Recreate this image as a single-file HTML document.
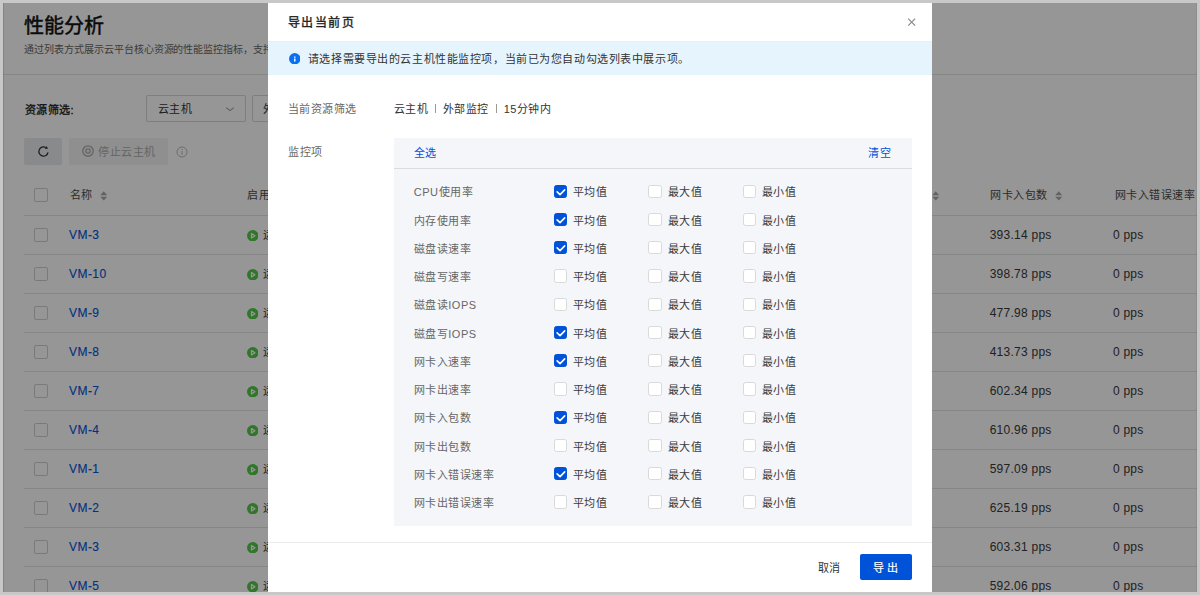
<!DOCTYPE html>
<html lang="zh-CN"><head><meta charset="utf-8">
<style>
*{margin:0;padding:0;box-sizing:border-box}
html,body{width:1200px;height:595px;overflow:hidden;background:#fff}
body{font-family:"Liberation Sans",sans-serif;position:relative;color:#333}
.a{position:absolute;white-space:nowrap}
#bg{position:absolute;left:0;top:0;width:1200px;height:595px;background:#fff}
#ov{position:absolute;left:0;top:0;width:1200px;height:595px;background:rgba(0,0,0,0.41)}
#frame{position:absolute;left:0;top:0;width:1200px;height:595px;border:3px solid #c8c8c8}
.hl{position:absolute;height:1px;background:#e0e5e3}
.cb{position:absolute;width:13.5px;height:13.5px;border:1px solid #d0d0d0;border-radius:2px;background:#fff}
#modal{position:absolute;left:268px;top:3px;width:664px;height:600px;background:#fff}
.pcb{position:absolute;width:13.3px;height:13.3px;border:1px solid #d9d9d9;border-radius:2.5px;background:#fff}
.pcb.on{background:#0052d9;border-color:#0052d9}
</style></head><body>
<div id="bg">
<div class="a" style="left:24.00px;top:15.70px;font-size:20px;line-height:20px;letter-spacing:0px;color:#111;font-weight:normal;-webkit-text-stroke:0.5px #111">性能分析</div>
<div class="a" style="left:23.80px;top:39.80px;font-size:10px;line-height:20px;letter-spacing:-0.02px;color:#666;font-weight:normal;">通过列表方式展示云平台核心资源的性能监控指标，支持通过多种维度进行筛选</div>
<div class="hl" style="left:3px;top:74px;width:1194px"></div>
<div class="a" style="left:24.60px;top:99.80px;font-size:11px;line-height:20px;letter-spacing:0.5px;color:#222;font-weight:normal;-webkit-text-stroke:0.3px #222">资源筛选:</div>
<div class="a" style="left:146px;top:95px;width:100px;height:27px;border:1px solid #d6d6d6;border-radius:2px"></div>
<div class="a" style="left:157.50px;top:99.30px;font-size:11px;line-height:20px;letter-spacing:0.5px;color:#333;font-weight:normal;">云主机</div>
<svg class="a" style="left:225px;top:106px" width="10" height="6" viewBox="0 0 10 6"><path d="M1.2 1.6 L5 4.6 L8.8 1.6" fill="none" stroke="#a0a0a0" stroke-width="1.1"/></svg>
<div class="a" style="left:252px;top:95px;width:100px;height:27px;border:1px solid #d6d6d6;border-radius:2px"></div>
<div class="a" style="left:263.00px;top:99.30px;font-size:11px;line-height:20px;letter-spacing:0.5px;color:#333;font-weight:normal;">外部监控</div>
<div class="a" style="left:24px;top:138px;width:38px;height:27px;background:#e8eaee;border-radius:2px"></div>
<svg class="a" style="left:36.5px;top:145px" width="13" height="13" viewBox="0 0 13 13"><path d="M11.03 7.3 A4.6 4.6 0 1 1 8.8 2.52" fill="none" stroke="#333" stroke-width="1.25"/><path d="M10.9 3.7 L7.9 3.9 L9.7 0.9 Z" fill="#333"/></svg>
<div class="a" style="left:69px;top:138px;width:99px;height:27px;background:#f3f3f3;border-radius:2px"></div>
<svg class="a" style="left:81.6px;top:145.4px" width="12" height="12" viewBox="0 0 12 12"><circle cx="6" cy="6" r="5.2" fill="none" stroke="#a9a9a9" stroke-width="1.3"/><rect x="3.9" y="3.9" width="4.2" height="4.2" rx="1.6" fill="none" stroke="#a9a9a9" stroke-width="1.3"/></svg>
<div class="a" style="left:98.40px;top:142.00px;font-size:11px;line-height:20px;letter-spacing:0.5px;color:#acacac;font-weight:normal;">停止云主机</div>
<svg class="a" style="left:175.6px;top:146px" width="12" height="12" viewBox="0 0 12 12"><circle cx="6" cy="6" r="5" fill="none" stroke="#bbb" stroke-width="1"/><rect x="5.5" y="5" width="1" height="3.8" fill="#bbb"/><rect x="5.5" y="3" width="1" height="1.1" fill="#bbb"/></svg>
<div class="cb" style="left:34px;top:188px"></div>
<div class="a" style="left:69.50px;top:185.00px;font-size:11px;line-height:20px;letter-spacing:0.5px;color:#4a4a4a;font-weight:normal;">名称</div>
<svg class="a" style="left:99.7px;top:190.5px" width="7.5" height="10" viewBox="0 0 7.5 10"><path d="M3.75 0.3 L7.2 4.2 L0.3 4.2 Z M3.75 9.6 L7.2 5.7 L0.3 5.7 Z" fill="#a8a8a8"/></svg>
<div class="a" style="left:247.00px;top:185.00px;font-size:11px;line-height:20px;letter-spacing:0.5px;color:#4a4a4a;font-weight:normal;">启用状态</div>
<svg class="a" style="left:932.0px;top:190.5px" width="7.5" height="10" viewBox="0 0 7.5 10"><path d="M3.75 0.3 L7.2 4.2 L0.3 4.2 Z M3.75 9.6 L7.2 5.7 L0.3 5.7 Z" fill="#a8a8a8"/></svg>
<div class="a" style="left:990.00px;top:185.00px;font-size:11px;line-height:20px;letter-spacing:0.5px;color:#4a4a4a;font-weight:normal;">网卡入包数</div>
<svg class="a" style="left:1055.2px;top:190.5px" width="7.5" height="10" viewBox="0 0 7.5 10"><path d="M3.75 0.3 L7.2 4.2 L0.3 4.2 Z M3.75 9.6 L7.2 5.7 L0.3 5.7 Z" fill="#a8a8a8"/></svg>
<div class="a" style="left:1114.50px;top:185.00px;font-size:11px;line-height:20px;letter-spacing:0.5px;color:#4a4a4a;font-weight:normal;">网卡入错误速率</div>
<div class="hl" style="left:24px;top:214.5px;width:1173px"></div>
<div class="cb" style="left:34px;top:228.4px"></div>
<div class="a" style="left:69.00px;top:224.70px;font-size:12px;line-height:20px;letter-spacing:0.45px;color:#0052d9;font-weight:normal;-webkit-text-stroke:0.1px #0052d9">VM-3</div>
<svg class="a" style="left:246.9px;top:229.6px" width="11.5" height="11.5" viewBox="0 0 12 12"><circle cx="6" cy="6" r="6" fill="#55c94a"/><path d="M4.7 3.7 L8.3 6 L4.7 8.3 Z" fill="none" stroke="#fff" stroke-width="1.3" stroke-linejoin="round"/></svg>
<div class="a" style="left:263.00px;top:225.10px;font-size:11px;line-height:20px;letter-spacing:0.5px;color:#333;font-weight:normal;">运行中</div>
<div class="a" style="left:989.70px;top:224.70px;font-size:12px;line-height:20px;letter-spacing:0.25px;color:#383838;font-weight:normal;">393.14 pps</div>
<div class="a" style="left:1112.90px;top:224.70px;font-size:12px;line-height:20px;letter-spacing:0.25px;color:#383838;font-weight:normal;">0 pps</div>
<div class="hl" style="left:24px;top:253.5px;width:1173px"></div>
<div class="cb" style="left:34px;top:267.4px"></div>
<div class="a" style="left:69.00px;top:263.70px;font-size:12px;line-height:20px;letter-spacing:0.45px;color:#0052d9;font-weight:normal;-webkit-text-stroke:0.1px #0052d9">VM-10</div>
<svg class="a" style="left:246.9px;top:268.6px" width="11.5" height="11.5" viewBox="0 0 12 12"><circle cx="6" cy="6" r="6" fill="#55c94a"/><path d="M4.7 3.7 L8.3 6 L4.7 8.3 Z" fill="none" stroke="#fff" stroke-width="1.3" stroke-linejoin="round"/></svg>
<div class="a" style="left:263.00px;top:264.10px;font-size:11px;line-height:20px;letter-spacing:0.5px;color:#333;font-weight:normal;">运行中</div>
<div class="a" style="left:989.70px;top:263.70px;font-size:12px;line-height:20px;letter-spacing:0.25px;color:#383838;font-weight:normal;">398.78 pps</div>
<div class="a" style="left:1112.90px;top:263.70px;font-size:12px;line-height:20px;letter-spacing:0.25px;color:#383838;font-weight:normal;">0 pps</div>
<div class="hl" style="left:24px;top:292.5px;width:1173px"></div>
<div class="cb" style="left:34px;top:306.4px"></div>
<div class="a" style="left:69.00px;top:302.70px;font-size:12px;line-height:20px;letter-spacing:0.45px;color:#0052d9;font-weight:normal;-webkit-text-stroke:0.1px #0052d9">VM-9</div>
<svg class="a" style="left:246.9px;top:307.6px" width="11.5" height="11.5" viewBox="0 0 12 12"><circle cx="6" cy="6" r="6" fill="#55c94a"/><path d="M4.7 3.7 L8.3 6 L4.7 8.3 Z" fill="none" stroke="#fff" stroke-width="1.3" stroke-linejoin="round"/></svg>
<div class="a" style="left:263.00px;top:303.10px;font-size:11px;line-height:20px;letter-spacing:0.5px;color:#333;font-weight:normal;">运行中</div>
<div class="a" style="left:989.70px;top:302.70px;font-size:12px;line-height:20px;letter-spacing:0.25px;color:#383838;font-weight:normal;">477.98 pps</div>
<div class="a" style="left:1112.90px;top:302.70px;font-size:12px;line-height:20px;letter-spacing:0.25px;color:#383838;font-weight:normal;">0 pps</div>
<div class="hl" style="left:24px;top:331.5px;width:1173px"></div>
<div class="cb" style="left:34px;top:345.4px"></div>
<div class="a" style="left:69.00px;top:341.70px;font-size:12px;line-height:20px;letter-spacing:0.45px;color:#0052d9;font-weight:normal;-webkit-text-stroke:0.1px #0052d9">VM-8</div>
<svg class="a" style="left:246.9px;top:346.6px" width="11.5" height="11.5" viewBox="0 0 12 12"><circle cx="6" cy="6" r="6" fill="#55c94a"/><path d="M4.7 3.7 L8.3 6 L4.7 8.3 Z" fill="none" stroke="#fff" stroke-width="1.3" stroke-linejoin="round"/></svg>
<div class="a" style="left:263.00px;top:342.10px;font-size:11px;line-height:20px;letter-spacing:0.5px;color:#333;font-weight:normal;">运行中</div>
<div class="a" style="left:989.70px;top:341.70px;font-size:12px;line-height:20px;letter-spacing:0.25px;color:#383838;font-weight:normal;">413.73 pps</div>
<div class="a" style="left:1112.90px;top:341.70px;font-size:12px;line-height:20px;letter-spacing:0.25px;color:#383838;font-weight:normal;">0 pps</div>
<div class="hl" style="left:24px;top:370.5px;width:1173px"></div>
<div class="cb" style="left:34px;top:384.4px"></div>
<div class="a" style="left:69.00px;top:380.70px;font-size:12px;line-height:20px;letter-spacing:0.45px;color:#0052d9;font-weight:normal;-webkit-text-stroke:0.1px #0052d9">VM-7</div>
<svg class="a" style="left:246.9px;top:385.6px" width="11.5" height="11.5" viewBox="0 0 12 12"><circle cx="6" cy="6" r="6" fill="#55c94a"/><path d="M4.7 3.7 L8.3 6 L4.7 8.3 Z" fill="none" stroke="#fff" stroke-width="1.3" stroke-linejoin="round"/></svg>
<div class="a" style="left:263.00px;top:381.10px;font-size:11px;line-height:20px;letter-spacing:0.5px;color:#333;font-weight:normal;">运行中</div>
<div class="a" style="left:989.70px;top:380.70px;font-size:12px;line-height:20px;letter-spacing:0.25px;color:#383838;font-weight:normal;">602.34 pps</div>
<div class="a" style="left:1112.90px;top:380.70px;font-size:12px;line-height:20px;letter-spacing:0.25px;color:#383838;font-weight:normal;">0 pps</div>
<div class="hl" style="left:24px;top:409.5px;width:1173px"></div>
<div class="cb" style="left:34px;top:423.4px"></div>
<div class="a" style="left:69.00px;top:419.70px;font-size:12px;line-height:20px;letter-spacing:0.45px;color:#0052d9;font-weight:normal;-webkit-text-stroke:0.1px #0052d9">VM-4</div>
<svg class="a" style="left:246.9px;top:424.6px" width="11.5" height="11.5" viewBox="0 0 12 12"><circle cx="6" cy="6" r="6" fill="#55c94a"/><path d="M4.7 3.7 L8.3 6 L4.7 8.3 Z" fill="none" stroke="#fff" stroke-width="1.3" stroke-linejoin="round"/></svg>
<div class="a" style="left:263.00px;top:420.10px;font-size:11px;line-height:20px;letter-spacing:0.5px;color:#333;font-weight:normal;">运行中</div>
<div class="a" style="left:989.70px;top:419.70px;font-size:12px;line-height:20px;letter-spacing:0.25px;color:#383838;font-weight:normal;">610.96 pps</div>
<div class="a" style="left:1112.90px;top:419.70px;font-size:12px;line-height:20px;letter-spacing:0.25px;color:#383838;font-weight:normal;">0 pps</div>
<div class="hl" style="left:24px;top:448.5px;width:1173px"></div>
<div class="cb" style="left:34px;top:462.4px"></div>
<div class="a" style="left:69.00px;top:458.70px;font-size:12px;line-height:20px;letter-spacing:0.45px;color:#0052d9;font-weight:normal;-webkit-text-stroke:0.1px #0052d9">VM-1</div>
<svg class="a" style="left:246.9px;top:463.6px" width="11.5" height="11.5" viewBox="0 0 12 12"><circle cx="6" cy="6" r="6" fill="#55c94a"/><path d="M4.7 3.7 L8.3 6 L4.7 8.3 Z" fill="none" stroke="#fff" stroke-width="1.3" stroke-linejoin="round"/></svg>
<div class="a" style="left:263.00px;top:459.10px;font-size:11px;line-height:20px;letter-spacing:0.5px;color:#333;font-weight:normal;">运行中</div>
<div class="a" style="left:989.70px;top:458.70px;font-size:12px;line-height:20px;letter-spacing:0.25px;color:#383838;font-weight:normal;">597.09 pps</div>
<div class="a" style="left:1112.90px;top:458.70px;font-size:12px;line-height:20px;letter-spacing:0.25px;color:#383838;font-weight:normal;">0 pps</div>
<div class="hl" style="left:24px;top:487.5px;width:1173px"></div>
<div class="cb" style="left:34px;top:501.4px"></div>
<div class="a" style="left:69.00px;top:497.70px;font-size:12px;line-height:20px;letter-spacing:0.45px;color:#0052d9;font-weight:normal;-webkit-text-stroke:0.1px #0052d9">VM-2</div>
<svg class="a" style="left:246.9px;top:502.6px" width="11.5" height="11.5" viewBox="0 0 12 12"><circle cx="6" cy="6" r="6" fill="#55c94a"/><path d="M4.7 3.7 L8.3 6 L4.7 8.3 Z" fill="none" stroke="#fff" stroke-width="1.3" stroke-linejoin="round"/></svg>
<div class="a" style="left:263.00px;top:498.10px;font-size:11px;line-height:20px;letter-spacing:0.5px;color:#333;font-weight:normal;">运行中</div>
<div class="a" style="left:989.70px;top:497.70px;font-size:12px;line-height:20px;letter-spacing:0.25px;color:#383838;font-weight:normal;">625.19 pps</div>
<div class="a" style="left:1112.90px;top:497.70px;font-size:12px;line-height:20px;letter-spacing:0.25px;color:#383838;font-weight:normal;">0 pps</div>
<div class="hl" style="left:24px;top:526.5px;width:1173px"></div>
<div class="cb" style="left:34px;top:540.4px"></div>
<div class="a" style="left:69.00px;top:536.70px;font-size:12px;line-height:20px;letter-spacing:0.45px;color:#0052d9;font-weight:normal;-webkit-text-stroke:0.1px #0052d9">VM-3</div>
<svg class="a" style="left:246.9px;top:541.6px" width="11.5" height="11.5" viewBox="0 0 12 12"><circle cx="6" cy="6" r="6" fill="#55c94a"/><path d="M4.7 3.7 L8.3 6 L4.7 8.3 Z" fill="none" stroke="#fff" stroke-width="1.3" stroke-linejoin="round"/></svg>
<div class="a" style="left:263.00px;top:537.10px;font-size:11px;line-height:20px;letter-spacing:0.5px;color:#333;font-weight:normal;">运行中</div>
<div class="a" style="left:989.70px;top:536.70px;font-size:12px;line-height:20px;letter-spacing:0.25px;color:#383838;font-weight:normal;">603.31 pps</div>
<div class="a" style="left:1112.90px;top:536.70px;font-size:12px;line-height:20px;letter-spacing:0.25px;color:#383838;font-weight:normal;">0 pps</div>
<div class="hl" style="left:24px;top:565.5px;width:1173px"></div>
<div class="cb" style="left:34px;top:579.4px"></div>
<div class="a" style="left:69.00px;top:575.70px;font-size:12px;line-height:20px;letter-spacing:0.45px;color:#0052d9;font-weight:normal;-webkit-text-stroke:0.1px #0052d9">VM-5</div>
<svg class="a" style="left:246.9px;top:580.6px" width="11.5" height="11.5" viewBox="0 0 12 12"><circle cx="6" cy="6" r="6" fill="#55c94a"/><path d="M4.7 3.7 L8.3 6 L4.7 8.3 Z" fill="none" stroke="#fff" stroke-width="1.3" stroke-linejoin="round"/></svg>
<div class="a" style="left:263.00px;top:576.10px;font-size:11px;line-height:20px;letter-spacing:0.5px;color:#333;font-weight:normal;">运行中</div>
<div class="a" style="left:989.70px;top:575.70px;font-size:12px;line-height:20px;letter-spacing:0.25px;color:#383838;font-weight:normal;">592.06 pps</div>
<div class="a" style="left:1112.90px;top:575.70px;font-size:12px;line-height:20px;letter-spacing:0.25px;color:#383838;font-weight:normal;">0 pps</div>
<div class="hl" style="left:24px;top:604.5px;width:1173px"></div>
</div>
<div id="ov"></div>
<div id="modal">
<div class="a" style="left:19.80px;top:9.90px;font-size:12px;line-height:20px;letter-spacing:1.45px;color:#222;font-weight:normal;-webkit-text-stroke:0.35px #222">导出当前页</div>
<svg class="a" style="left:639px;top:15px" width="10" height="10" viewBox="0 0 10 10"><path d="M1.2 0.65 L8.1 7.55 M8.1 0.65 L1.2 7.55" stroke="#8a8a8a" stroke-width="1.2"/></svg>
<div class="a" style="left:0;top:38px;width:664px;height:34px;background:#e6f5fd;border-top:1px solid #ebeef0"></div>
<svg class="a" style="left:20.94999999999999px;top:49.8px" width="11.5" height="11.5" viewBox="0 0 11.5 11.5"><circle cx="5.75" cy="5.75" r="5.7" fill="#0870f2"/><rect x="5" y="3.4" width="1.5" height="1.3" rx="0.3" fill="#fff"/><rect x="5" y="5.5" width="1.5" height="3.1" rx="0.3" fill="#fff"/></svg>
<div class="a" style="left:39.90px;top:46.10px;font-size:11px;line-height:20px;letter-spacing:0.57px;color:#333;font-weight:normal;">请选择需要导出的云主机性能监控项，当前已为您自动勾选列表中展示项。</div>
<div class="a" style="left:19.90px;top:95.70px;font-size:11px;line-height:20px;letter-spacing:0.43px;color:#666;font-weight:normal;">当前资源筛选</div>
<div class="a" style="left:125.60px;top:95.70px;font-size:11px;line-height:20px;letter-spacing:0.5px;color:#333;font-weight:normal;">云主机<span style="display:inline-block;width:1px;height:9px;background:#9a9a9a;vertical-align:-0.3px;margin:0 6.5px 0 7.3px"></span>外部监控<span style="display:inline-block;width:1px;height:9px;background:#9a9a9a;vertical-align:-0.3px;margin:0 6.5px 0 7.3px"></span>15分钟内</div>
<div class="a" style="left:20.00px;top:139.00px;font-size:11px;line-height:20px;letter-spacing:0.5px;color:#666;font-weight:normal;">监控项</div>
<div class="a" style="left:126px;top:135px;width:518px;height:388px;background:#f5f6fa"></div>
<div class="a" style="left:145.80px;top:140.30px;font-size:11px;line-height:20px;letter-spacing:0.5px;color:#0052d9;font-weight:normal;">全选</div>
<div class="a" style="left:600.20px;top:140.30px;font-size:11px;line-height:20px;letter-spacing:0.5px;color:#0052d9;font-weight:normal;">清空</div>
<div class="a" style="left:126px;top:165px;width:518px;height:1px;background:#dcdcdc"></div>
<div class="a" style="left:145.80px;top:179.25px;font-size:11px;line-height:20px;letter-spacing:0.5px;color:#666;font-weight:normal;">CPU使用率</div>
<div class="pcb on" style="left:285.8px;top:181.70px"><svg width="13.5" height="13.5" viewBox="0 0 13.5 13.5" style="position:absolute;left:-1px;top:-1px"><path d="M3.1 6.8 L6.05 9.6 L10.7 4.9" fill="none" stroke="#fff" stroke-width="1.6" stroke-linecap="round" stroke-linejoin="round"/></svg></div>
<div class="a" style="left:304.90px;top:179.25px;font-size:11px;line-height:20px;letter-spacing:0.5px;color:#3a3a3a;font-weight:normal;">平均值</div>
<div class="pcb" style="left:380.4px;top:181.70px"></div>
<div class="a" style="left:399.50px;top:179.25px;font-size:11px;line-height:20px;letter-spacing:0.5px;color:#3a3a3a;font-weight:normal;">最大值</div>
<div class="pcb" style="left:475.1px;top:181.70px"></div>
<div class="a" style="left:493.90px;top:179.25px;font-size:11px;line-height:20px;letter-spacing:0.5px;color:#3a3a3a;font-weight:normal;">最小值</div>
<div class="a" style="left:145.80px;top:207.50px;font-size:11px;line-height:20px;letter-spacing:0.5px;color:#666;font-weight:normal;">内存使用率</div>
<div class="pcb on" style="left:285.8px;top:209.95px"><svg width="13.5" height="13.5" viewBox="0 0 13.5 13.5" style="position:absolute;left:-1px;top:-1px"><path d="M3.1 6.8 L6.05 9.6 L10.7 4.9" fill="none" stroke="#fff" stroke-width="1.6" stroke-linecap="round" stroke-linejoin="round"/></svg></div>
<div class="a" style="left:304.90px;top:207.50px;font-size:11px;line-height:20px;letter-spacing:0.5px;color:#3a3a3a;font-weight:normal;">平均值</div>
<div class="pcb" style="left:380.4px;top:209.95px"></div>
<div class="a" style="left:399.50px;top:207.50px;font-size:11px;line-height:20px;letter-spacing:0.5px;color:#3a3a3a;font-weight:normal;">最大值</div>
<div class="pcb" style="left:475.1px;top:209.95px"></div>
<div class="a" style="left:493.90px;top:207.50px;font-size:11px;line-height:20px;letter-spacing:0.5px;color:#3a3a3a;font-weight:normal;">最小值</div>
<div class="a" style="left:145.80px;top:235.75px;font-size:11px;line-height:20px;letter-spacing:0.5px;color:#666;font-weight:normal;">磁盘读速率</div>
<div class="pcb on" style="left:285.8px;top:238.20px"><svg width="13.5" height="13.5" viewBox="0 0 13.5 13.5" style="position:absolute;left:-1px;top:-1px"><path d="M3.1 6.8 L6.05 9.6 L10.7 4.9" fill="none" stroke="#fff" stroke-width="1.6" stroke-linecap="round" stroke-linejoin="round"/></svg></div>
<div class="a" style="left:304.90px;top:235.75px;font-size:11px;line-height:20px;letter-spacing:0.5px;color:#3a3a3a;font-weight:normal;">平均值</div>
<div class="pcb" style="left:380.4px;top:238.20px"></div>
<div class="a" style="left:399.50px;top:235.75px;font-size:11px;line-height:20px;letter-spacing:0.5px;color:#3a3a3a;font-weight:normal;">最大值</div>
<div class="pcb" style="left:475.1px;top:238.20px"></div>
<div class="a" style="left:493.90px;top:235.75px;font-size:11px;line-height:20px;letter-spacing:0.5px;color:#3a3a3a;font-weight:normal;">最小值</div>
<div class="a" style="left:145.80px;top:264.00px;font-size:11px;line-height:20px;letter-spacing:0.5px;color:#666;font-weight:normal;">磁盘写速率</div>
<div class="pcb" style="left:285.8px;top:266.45px"></div>
<div class="a" style="left:304.90px;top:264.00px;font-size:11px;line-height:20px;letter-spacing:0.5px;color:#3a3a3a;font-weight:normal;">平均值</div>
<div class="pcb" style="left:380.4px;top:266.45px"></div>
<div class="a" style="left:399.50px;top:264.00px;font-size:11px;line-height:20px;letter-spacing:0.5px;color:#3a3a3a;font-weight:normal;">最大值</div>
<div class="pcb" style="left:475.1px;top:266.45px"></div>
<div class="a" style="left:493.90px;top:264.00px;font-size:11px;line-height:20px;letter-spacing:0.5px;color:#3a3a3a;font-weight:normal;">最小值</div>
<div class="a" style="left:145.80px;top:292.25px;font-size:11px;line-height:20px;letter-spacing:0.5px;color:#666;font-weight:normal;">磁盘读IOPS</div>
<div class="pcb" style="left:285.8px;top:294.70px"></div>
<div class="a" style="left:304.90px;top:292.25px;font-size:11px;line-height:20px;letter-spacing:0.5px;color:#3a3a3a;font-weight:normal;">平均值</div>
<div class="pcb" style="left:380.4px;top:294.70px"></div>
<div class="a" style="left:399.50px;top:292.25px;font-size:11px;line-height:20px;letter-spacing:0.5px;color:#3a3a3a;font-weight:normal;">最大值</div>
<div class="pcb" style="left:475.1px;top:294.70px"></div>
<div class="a" style="left:493.90px;top:292.25px;font-size:11px;line-height:20px;letter-spacing:0.5px;color:#3a3a3a;font-weight:normal;">最小值</div>
<div class="a" style="left:145.80px;top:320.50px;font-size:11px;line-height:20px;letter-spacing:0.5px;color:#666;font-weight:normal;">磁盘写IOPS</div>
<div class="pcb on" style="left:285.8px;top:322.95px"><svg width="13.5" height="13.5" viewBox="0 0 13.5 13.5" style="position:absolute;left:-1px;top:-1px"><path d="M3.1 6.8 L6.05 9.6 L10.7 4.9" fill="none" stroke="#fff" stroke-width="1.6" stroke-linecap="round" stroke-linejoin="round"/></svg></div>
<div class="a" style="left:304.90px;top:320.50px;font-size:11px;line-height:20px;letter-spacing:0.5px;color:#3a3a3a;font-weight:normal;">平均值</div>
<div class="pcb" style="left:380.4px;top:322.95px"></div>
<div class="a" style="left:399.50px;top:320.50px;font-size:11px;line-height:20px;letter-spacing:0.5px;color:#3a3a3a;font-weight:normal;">最大值</div>
<div class="pcb" style="left:475.1px;top:322.95px"></div>
<div class="a" style="left:493.90px;top:320.50px;font-size:11px;line-height:20px;letter-spacing:0.5px;color:#3a3a3a;font-weight:normal;">最小值</div>
<div class="a" style="left:145.80px;top:348.75px;font-size:11px;line-height:20px;letter-spacing:0.5px;color:#666;font-weight:normal;">网卡入速率</div>
<div class="pcb on" style="left:285.8px;top:351.20px"><svg width="13.5" height="13.5" viewBox="0 0 13.5 13.5" style="position:absolute;left:-1px;top:-1px"><path d="M3.1 6.8 L6.05 9.6 L10.7 4.9" fill="none" stroke="#fff" stroke-width="1.6" stroke-linecap="round" stroke-linejoin="round"/></svg></div>
<div class="a" style="left:304.90px;top:348.75px;font-size:11px;line-height:20px;letter-spacing:0.5px;color:#3a3a3a;font-weight:normal;">平均值</div>
<div class="pcb" style="left:380.4px;top:351.20px"></div>
<div class="a" style="left:399.50px;top:348.75px;font-size:11px;line-height:20px;letter-spacing:0.5px;color:#3a3a3a;font-weight:normal;">最大值</div>
<div class="pcb" style="left:475.1px;top:351.20px"></div>
<div class="a" style="left:493.90px;top:348.75px;font-size:11px;line-height:20px;letter-spacing:0.5px;color:#3a3a3a;font-weight:normal;">最小值</div>
<div class="a" style="left:145.80px;top:377.00px;font-size:11px;line-height:20px;letter-spacing:0.5px;color:#666;font-weight:normal;">网卡出速率</div>
<div class="pcb" style="left:285.8px;top:379.45px"></div>
<div class="a" style="left:304.90px;top:377.00px;font-size:11px;line-height:20px;letter-spacing:0.5px;color:#3a3a3a;font-weight:normal;">平均值</div>
<div class="pcb" style="left:380.4px;top:379.45px"></div>
<div class="a" style="left:399.50px;top:377.00px;font-size:11px;line-height:20px;letter-spacing:0.5px;color:#3a3a3a;font-weight:normal;">最大值</div>
<div class="pcb" style="left:475.1px;top:379.45px"></div>
<div class="a" style="left:493.90px;top:377.00px;font-size:11px;line-height:20px;letter-spacing:0.5px;color:#3a3a3a;font-weight:normal;">最小值</div>
<div class="a" style="left:145.80px;top:405.25px;font-size:11px;line-height:20px;letter-spacing:0.5px;color:#666;font-weight:normal;">网卡入包数</div>
<div class="pcb on" style="left:285.8px;top:407.70px"><svg width="13.5" height="13.5" viewBox="0 0 13.5 13.5" style="position:absolute;left:-1px;top:-1px"><path d="M3.1 6.8 L6.05 9.6 L10.7 4.9" fill="none" stroke="#fff" stroke-width="1.6" stroke-linecap="round" stroke-linejoin="round"/></svg></div>
<div class="a" style="left:304.90px;top:405.25px;font-size:11px;line-height:20px;letter-spacing:0.5px;color:#3a3a3a;font-weight:normal;">平均值</div>
<div class="pcb" style="left:380.4px;top:407.70px"></div>
<div class="a" style="left:399.50px;top:405.25px;font-size:11px;line-height:20px;letter-spacing:0.5px;color:#3a3a3a;font-weight:normal;">最大值</div>
<div class="pcb" style="left:475.1px;top:407.70px"></div>
<div class="a" style="left:493.90px;top:405.25px;font-size:11px;line-height:20px;letter-spacing:0.5px;color:#3a3a3a;font-weight:normal;">最小值</div>
<div class="a" style="left:145.80px;top:433.50px;font-size:11px;line-height:20px;letter-spacing:0.5px;color:#666;font-weight:normal;">网卡出包数</div>
<div class="pcb" style="left:285.8px;top:435.95px"></div>
<div class="a" style="left:304.90px;top:433.50px;font-size:11px;line-height:20px;letter-spacing:0.5px;color:#3a3a3a;font-weight:normal;">平均值</div>
<div class="pcb" style="left:380.4px;top:435.95px"></div>
<div class="a" style="left:399.50px;top:433.50px;font-size:11px;line-height:20px;letter-spacing:0.5px;color:#3a3a3a;font-weight:normal;">最大值</div>
<div class="pcb" style="left:475.1px;top:435.95px"></div>
<div class="a" style="left:493.90px;top:433.50px;font-size:11px;line-height:20px;letter-spacing:0.5px;color:#3a3a3a;font-weight:normal;">最小值</div>
<div class="a" style="left:145.80px;top:461.75px;font-size:11px;line-height:20px;letter-spacing:0.5px;color:#666;font-weight:normal;">网卡入错误速率</div>
<div class="pcb on" style="left:285.8px;top:464.20px"><svg width="13.5" height="13.5" viewBox="0 0 13.5 13.5" style="position:absolute;left:-1px;top:-1px"><path d="M3.1 6.8 L6.05 9.6 L10.7 4.9" fill="none" stroke="#fff" stroke-width="1.6" stroke-linecap="round" stroke-linejoin="round"/></svg></div>
<div class="a" style="left:304.90px;top:461.75px;font-size:11px;line-height:20px;letter-spacing:0.5px;color:#3a3a3a;font-weight:normal;">平均值</div>
<div class="pcb" style="left:380.4px;top:464.20px"></div>
<div class="a" style="left:399.50px;top:461.75px;font-size:11px;line-height:20px;letter-spacing:0.5px;color:#3a3a3a;font-weight:normal;">最大值</div>
<div class="pcb" style="left:475.1px;top:464.20px"></div>
<div class="a" style="left:493.90px;top:461.75px;font-size:11px;line-height:20px;letter-spacing:0.5px;color:#3a3a3a;font-weight:normal;">最小值</div>
<div class="a" style="left:145.80px;top:490.00px;font-size:11px;line-height:20px;letter-spacing:0.5px;color:#666;font-weight:normal;">网卡出错误速率</div>
<div class="pcb" style="left:285.8px;top:492.45px"></div>
<div class="a" style="left:304.90px;top:490.00px;font-size:11px;line-height:20px;letter-spacing:0.5px;color:#3a3a3a;font-weight:normal;">平均值</div>
<div class="pcb" style="left:380.4px;top:492.45px"></div>
<div class="a" style="left:399.50px;top:490.00px;font-size:11px;line-height:20px;letter-spacing:0.5px;color:#3a3a3a;font-weight:normal;">最大值</div>
<div class="pcb" style="left:475.1px;top:492.45px"></div>
<div class="a" style="left:493.90px;top:490.00px;font-size:11px;line-height:20px;letter-spacing:0.5px;color:#3a3a3a;font-weight:normal;">最小值</div>
<div class="a" style="left:0;top:539px;width:664px;height:1px;background:#ececec"></div>
<div class="a" style="left:549.70px;top:554.60px;font-size:11px;line-height:20px;letter-spacing:0.8px;color:#333;font-weight:normal;">取消</div>
<div class="a" style="left:592px;top:551px;width:52px;height:26px;background:#0052d9;border-radius:2px"></div>
<div class="a" style="left:605.10px;top:554.80px;font-size:11px;line-height:20px;letter-spacing:3.3px;color:#fff;font-weight:normal;-webkit-text-stroke:0.2px #fff">导出</div>
</div>
<div class="a" style="left:3px;top:3px;width:1px;height:589px;background:rgba(0,0,0,0.12)"></div><div class="a" style="left:1196px;top:3px;width:1px;height:589px;background:rgba(0,0,0,0.06)"></div>
<div id="frame"></div>
</body></html>
